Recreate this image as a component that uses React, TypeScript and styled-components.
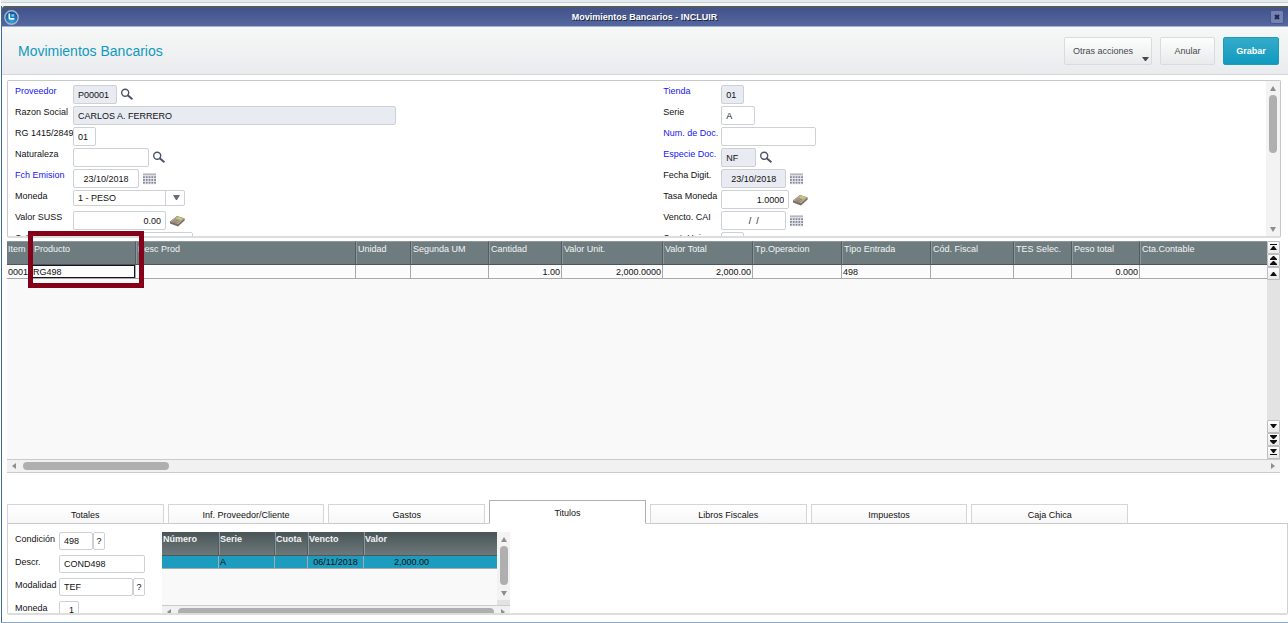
import React from "react";
import styled, { createGlobalStyle, css } from "styled-components";

const GlobalStyle = createGlobalStyle`
  * { box-sizing: border-box; }
  body { margin: 0; background: #fff; }
  body, input, select, button, table {
    font-family: "Liberation Sans", Arial, sans-serif;
    font-size: 9px;
    line-height: 12px;
    color: #111;
  }
`;

/* ---------- window frame ---------- */

const Page = styled.div`
  padding-left: 1px;
`;

const BackStrip = styled.div`
  height: 6px;
  background: #f4f6f7;
  border-top: 2px solid #e3eaee;
  box-shadow: inset 0 1px 0 #c3d0d6;
`;

const Window = styled.main`
  border-left: 1px solid #3f6ba3;
  border-bottom: 1px solid #8fa9c6;
`;

const TitleBar = styled.header`
  display: flex;
  align-items: center;
  justify-content: space-between;
  height: 21px;
  padding: 0 4px 0 2px;
  border-top: 2px solid #565a5c;
  border-bottom: 1px solid #a3b2cf;
  border-radius: 3px 0 0 0;
  background: linear-gradient(#42528a, #5567a0);
  color: #fff;
  font-weight: bold;
`;

const TitleText = styled.span`
  text-shadow: 1px 1px 0 #1c2342;
`;

const CloseButton = styled.button`
  display: flex;
  align-items: center;
  justify-content: center;
  width: 14px;
  height: 14px;
  padding: 0;
  border: 1px solid #46548a;
  border-radius: 2px;
  background: #7582b4;
`;

const Toolbar = styled.div`
  display: flex;
  align-items: center;
  justify-content: space-between;
  height: 48px;
  padding: 0 9px 0 16px;
  background: linear-gradient(#f6f8f7, #eaebee);
  border-bottom: 1px solid #d5d8da;
`;

const Heading = styled.h1`
  margin: 0;
  font-size: 14px;
  line-height: 16px;
  font-weight: normal;
  color: #1199c0;
`;

const Actions = styled.div`
  display: flex;
  gap: 8px;
`;

const ActionButton = styled.button<{ $width: number; $primary?: boolean }>`
  display: flex;
  align-items: center;
  justify-content: center;
  position: relative;
  width: ${(p) => p.$width}px;
  height: 28px;
  padding: 0;
  border: 1px solid #d9dbdd;
  border-radius: 2px;
  background: linear-gradient(#fdfdfd, #e9eaeb);
  color: #45484d;
  ${(p) =>
    p.$primary &&
    css`
      border-color: #1b9cbd;
      background: linear-gradient(#35abca, #109ac0);
      color: #fff;
      font-weight: bold;
    `}
`;

const MenuButton = styled(ActionButton)`
  justify-content: flex-start;
  padding-left: 8px;
`;

const Caret = styled.svg`
  position: absolute;
  right: 2px;
  bottom: 3px;
`;

/* ---------- shared form pieces ---------- */

const Field = styled.div<{ $labelWidth: number; $height: number }>`
  display: grid;
  grid-template-columns: ${(p) => p.$labelWidth}px 1fr;
  height: ${(p) => p.$height}px;
`;

const Label = styled.label<{ $required?: boolean }>`
  white-space: nowrap;
  color: ${(p) => (p.$required ? "#1616f0" : "#111")};
`;

const Controls = styled.div<{ $gap?: number }>`
  display: flex;
  align-items: flex-start;
  gap: ${(p) => p.$gap ?? 4}px;
`;

const TextBox = styled.input<{ $width: number; $small?: boolean; $align?: string }>`
  width: ${(p) => p.$width}px;
  height: ${(p) => (p.$small ? 18 : 19)}px;
  padding: 0 4px;
  border: 1px solid #cdd0d4;
  border-radius: 2px;
  background: #fff;
  text-align: ${(p) => p.$align ?? "left"};
  outline: none;
  &:read-only {
    background: #e8ebf2;
  }
`;

const SelectFrame = styled.div`
  display: grid;
  grid-template-columns: 1fr 18px;
  align-items: center;
  width: 112px;
  height: 16px;
  border: 1px solid #cdd0d4;
  border-radius: 2px;
`;

const Select = styled.select`
  appearance: none;
  height: 14px;
  padding: 0 4px;
  border: 0;
  border-right: 1px solid #cdd0d4;
  background: transparent;
  outline: none;
`;

const IconSlot = styled.button`
  display: flex;
  height: 19px;
  align-items: center;
  padding: 0;
  border: 0;
  background: none;
`;

const HelpButton = styled.button`
  width: 12px;
  height: 18px;
  padding: 0;
  border: 1px solid #cdd0d4;
  border-radius: 2px;
  background: #fff;
`;

/* ---------- supplier form ---------- */

const Content = styled.div`
  padding: 5px 0 7px 5px;
`;

const FormPanel = styled.section`
  display: grid;
  grid-template-columns: 1fr 14px;
  grid-template-rows: minmax(0, 1fr);
  height: 158px;
  margin-right: 7px;
  border: 1px solid #c6c8ca;
  border-bottom: 2px solid #dcdddf;
  border-radius: 2px;
  overflow: hidden;
`;

const FormColumns = styled.div`
  display: grid;
  grid-template-columns: 57fr 53fr;
  align-content: start;
  padding: 4px 0 0 7px;
`;

const ScrollTrack = styled.div`
  display: flex;
  flex-direction: column;
  align-items: center;
  padding: 4px 0;
  background: #f3f3f3;
`;

const VThumb = styled.div<{ $size: number }>`
  width: 8px;
  height: ${(p) => p.$size}px;
  margin: 4px 0 auto;
  border-radius: 4px;
  background: #afafaf;
`;

/* ---------- item grid ---------- */

const Grid = styled.section`
  position: relative;
  display: grid;
  grid-template-columns: 1fr 13px;
  grid-template-rows: 218px 14px;
  margin: 3px 8px 0 0;
`;

const GridBody = styled.div`
  overflow: hidden;
  background: #f9f9f9;
`;

const ItemTable = styled.table`
  width: 100%;
  table-layout: fixed;
  border-collapse: separate;
  border-spacing: 0;
  white-space: nowrap;
  th {
    height: 24px;
    padding: 1px 0 0 2px;
    border-right: 1px solid #535d5f;
    border-top: 1px solid #8d9799;
    border-bottom: 1px solid #4d5658;
    box-shadow: inset 1px 0 0 #8d9799;
    background: #6e7c80;
    color: #f2f4f4;
    font-weight: normal;
    text-align: left;
    vertical-align: top;
  }
  td {
    height: 14px;
    padding: 0 1px;
    border-right: 1px solid #a9a9a9;
    border-bottom: 1px solid #a9a9a9;
    background: #fcfcfc;
  }
  th:first-child { padding-left: 1px; box-shadow: none; }
  th:last-child, td:last-child { border-right: 0; }
`;

const Cell = styled.td<{ $right?: boolean; $current?: boolean }>`
  text-align: ${(p) => (p.$right ? "right" : "left")};
  ${(p) => p.$current && "box-shadow: inset 0 0 0 1px #15151f;"}
`;

const GridNav = styled.div`
  display: flex;
  flex-direction: column;
  background: #e3e3e3;
`;

const NavButton = styled.button<{ $pushed?: boolean }>`
  display: flex;
  align-items: center;
  justify-content: center;
  width: 13px;
  height: 13px;
  margin-top: ${(p) => (p.$pushed ? "auto" : "0")};
  padding: 0;
  border: 1px solid #bdbdbd;
  border-radius: 1px;
  background: linear-gradient(#fff, #e9e9e9);
`;

const HScroll = styled.div`
  grid-column: 1 / -1;
  display: flex;
  align-items: center;
  gap: 6px;
  height: 14px;
  padding: 0 4px;
  border-top: 1px solid #cbcbcb;
  border-bottom: 1px solid #cbcbcb;
  background: #f1f1f1;
`;

const HThumb = styled.div<{ $size: number }>`
  width: ${(p) => p.$size}px;
  height: 8px;
  margin-right: auto;
  border-radius: 4px;
  background: #afafaf;
`;

const Marker = styled.div`
  position: absolute;
  top: -10px;
  left: 21px;
  width: 116px;
  height: 57px;
  border: 5px solid #850019;
  pointer-events: none;
`;

/* ---------- tabs ---------- */

const TabBar = styled.div`
  display: flex;
  align-items: flex-end;
  gap: 4px;
  height: 24px;
  margin-top: 27px;
  padding-right: 160px;
  box-shadow: inset 0 -1px 0 #c9cbcd;
`;

const Tab = styled.button<{ $active?: boolean }>`
  flex: 1 1 0;
  height: ${(p) => (p.$active ? 24 : 20)}px;
  padding: 2px 0 0;
  border: 1px solid ${(p) => (p.$active ? "#aeb0b2" : "#d3d5d7")};
  border-bottom-color: ${(p) => (p.$active ? "#fff" : "#c9cbcd")};
  background: ${(p) => (p.$active ? "#fff" : "linear-gradient(#fff, #f7f7f7)")};
`;

const TabPanel = styled.section`
  display: flex;
  align-items: flex-start;
  gap: 18px;
  height: 91px;
  padding: 8px 0 0 7px;
  border: 1px solid #cfd1d3;
  border-top: 0;
  border-bottom: 2px solid #dcdddf;
  border-radius: 0 0 2px 2px;
  overflow: hidden;
`;

const TermFields = styled.div`
  width: 129px;
  ${Label} {
    padding-top: 1px;
  }
`;

const TitleGrid = styled.div`
  display: grid;
  grid-template-columns: 335px 13px;
  grid-template-rows: 73px 14px;
`;

const TitleTable = styled(ItemTable)`
  th {
    padding: 1px 0 0 1px;
    border-top: 0;
    background: linear-gradient(#4a5557, #6c787b);
    font-weight: bold;
  }
  td {
    height: 13px;
    background: #1c9cbe;
  }
`;

const CenterCell = styled.td`
  text-align: center;
`;

const AmountCell = styled.td`
  && { padding-left: 30px; }
`;

const TitleScroll = styled.div`
  display: flex;
  flex-direction: column;
  background: #e3e3e3;
  ${ScrollTrack} {
    height: 68px;
  }
`;

/* ---------- drawings ---------- */

type Dir = "up" | "down" | "left" | "right";
const arrowPoints: Record<Dir, string> = {
  up: "0,6 3,1 6,6",
  down: "0,1 3,6 6,1",
  left: "5,0 1,3 5,6",
  right: "1,0 5,3 1,6",
};

const Arrow = ({ dir }: { dir: Dir }) => (
  <svg width="6" height="6" viewBox="0 0 6 6" aria-hidden="true">
    <polygon points={arrowPoints[dir]} fill="#8e8e8e" />
  </svg>
);

const navShapes: Record<string, React.ReactNode> = {
  first: <path d="M1 1h7v1H1zM4 3h1l3 4H1z" />,
  pageUp: <path d="M4 0h1l3 3v1H1V3zM4 5h1l3 3v1H1V8z" />,
  up: <path d="M4 3h1l3 4H1z" />,
  down: <path d="M1 2h7L5 6H4z" />,
  pageDown: <path d="M1 0h7v1L5 4H4L1 1zM1 5h7v1L5 9H4L1 6z" />,
  last: <path d="M1 1h7L5 5H4zM1 6h7v1H1z" />,
};

const Nav = ({ kind, label, pushed }: { kind: string; label: string; pushed?: boolean }) => (
  <NavButton type="button" aria-label={label} $pushed={pushed}>
    <svg width="9" height="9" viewBox="0 0 9 9" fill="#111">{navShapes[kind]}</svg>
  </NavButton>
);

const SearchIcon = () => (
  <svg width="12" height="13" viewBox="0 0 12 13" fill="none" stroke="#4b5568">
    <circle cx="4.2" cy="4.8" r="3.5" strokeWidth="1.4" />
    <path d="M7 7.4l3.800 3.300" strokeWidth="2" strokeLinecap="round" />
  </svg>
);

const CalendarIcon = () => (
  <svg width="13" height="12" viewBox="0 0 14 12">
    <rect width="14" height="12" fill="#eeeff2" />
    <rect width="14" height="2" fill="#b4b7c0" />
    {[3, 6, 9].map((y) =>
      [0, 3, 6, 9, 12].map((x) => (
        <rect key={`${x}-${y}`} x={x} y={y} width="2" height="2" fill="#858a9a" />
      )),
    )}
  </svg>
);

const CalculatorIcon = () => (
  <svg width="15" height="12" viewBox="0 0 15 12">
    <path d="M0 6.5L7 1l7.6 2.500v2L8 11.5 0 8.5z" fill="#7c6a5c" />
    <path d="M0 6.5L7 1l7.6 2.5L8 9.5z" fill="#b3a798" />
    <path d="M6 3.2L8 1.8l4.6 1.5-1.9 1.7z" fill="#b9d468" />
    <path d="M3 5.6l5 2M4.6 4.5l5 1.8M2 6.6l5 1.9" stroke="#8b7a6c" strokeWidth=".8" />
  </svg>
);

const AppLogo = () => (
  <svg width="15" height="15" viewBox="0 0 15 15" aria-hidden="true">
    <defs>
      <radialGradient id="orb" cx=".5" cy=".8" r=".8">
        <stop offset="0" stopColor="#2fa6e0" />
        <stop offset="1" stopColor="#0a4a8c" />
      </radialGradient>
    </defs>
    <circle cx="7.5" cy="7.5" r="6.7" fill="url(#orb)" stroke="#a9b6c6" strokeWidth="1.4" />
    <path d="M4.500 3.500h1.600v4.500h4.200v1.700H6.200c-1.200 0-1.700-.6-1.700-1.700z" fill="#e8f5fc" />
    <path d="M7.400 4.200h2.800v2.400H7.400z" fill="#7fc4e8" />
  </svg>
);

/* ---------- data ---------- */

type FieldSpec = {
  id: string;
  label: string;
  width: number;
  value?: string;
  required?: boolean;
  locked?: boolean;
  align?: string;
  icon?: "search" | "calendar" | "calc";
  select?: boolean;
};

const leftFields: FieldSpec[] = [
  { id: "proveedor", label: "Proveedor", width: 44, value: "P00001", required: true, locked: true, icon: "search" },
  { id: "razon", label: "Razon Social", width: 323, value: "CARLOS A. FERRERO", locked: true },
  { id: "rg", label: "RG 1415/2849", width: 23, value: "01" },
  { id: "naturaleza", label: "Naturaleza", width: 76, icon: "search" },
  { id: "emision", label: "Fch Emision", width: 66, value: "23/10/2018", required: true, align: "center", icon: "calendar" },
  { id: "moneda", label: "Moneda", width: 112, value: "1 - PESO", select: true },
  { id: "suss", label: "Valor SUSS", width: 93, value: "0.00", align: "right", icon: "calc" },
  { id: "cai", label: "C.A.I.", width: 120 },
];

const rightFields: FieldSpec[] = [
  { id: "tienda", label: "Tienda", width: 23, value: "01", required: true, locked: true },
  { id: "serie", label: "Serie", width: 34, value: "A" },
  { id: "numdoc", label: "Num. de Doc.", width: 95, required: true },
  { id: "especie", label: "Especie Doc.", width: 35, value: "NF", required: true, locked: true, icon: "search" },
  { id: "digit", label: "Fecha Digit.", width: 65, value: "23/10/2018", locked: true, align: "center", icon: "calendar" },
  { id: "tasa", label: "Tasa Moneda", width: 68, value: "1.0000", align: "right", icon: "calc" },
  { id: "vencai", label: "Vencto. CAI", width: 65, value: "/  /", align: "center", icon: "calendar" },
  { id: "cont", label: "Cont. Unic.", width: 23 },
];

const icons = { search: <SearchIcon />, calendar: <CalendarIcon />, calc: <CalculatorIcon /> };

const itemColumns = [
  { title: "Item", width: 25, value: "0001" },
  { title: "Producto", width: 104, value: "RG498", current: true },
  { title: "Desc Prod", width: 220, value: "" },
  { title: "Unidad", width: 55, value: "" },
  { title: "Segunda UM", width: 78, value: "" },
  { title: "Cantidad", width: 73, value: "1.00", right: true },
  { title: "Valor Unit.", width: 101, value: "2,000.0000", right: true },
  { title: "Valor Total", width: 90, value: "2,000.00", right: true },
  { title: "Tp.Operacion", width: 89, value: "" },
  { title: "Tipo Entrada", width: 89, value: "498" },
  { title: "Cód. Fiscal", width: 83, value: "" },
  { title: "TES Selec.", width: 58, value: "" },
  { title: "Peso total", width: 68, value: "0.000", right: true },
  { title: "Cta.Contable", width: undefined, value: "" },
];

const tabs = ["Totales", "Inf. Proveedor/Cliente", "Gastos", "Titulos", "Libros Fiscales", "Impuestos", "Caja Chica"];

const terms = [
  { id: "condicion", label: "Condición", value: "498", width: 34, help: true },
  { id: "descr", label: "Descr.", value: "COND498", width: 86 },
  { id: "modalidad", label: "Modalidad", value: "TEF", width: 74, help: true },
  { id: "tmoneda", label: "Moneda", value: "1", width: 20, align: "right" },
];

const FieldColumn = ({ fields }: { fields: FieldSpec[] }) => (
  <div>
    {fields.map((f) => (
      <Field key={f.id} $labelWidth={58} $height={21}>
        <Label htmlFor={f.id} $required={f.required}>{f.label}</Label>
        <Controls>
          {f.select ? (
            <SelectFrame>
              <Select id={f.id} defaultValue={f.value}>
                <option>{f.value}</option>
              </Select>
              <svg width="18" height="6" viewBox="0 0 18 6" aria-hidden="true">
                <polygon points="7,0 14,0 11,5 10,5" fill="#666c75" />
              </svg>
            </SelectFrame>
          ) : (
            <TextBox id={f.id} $width={f.width} $align={f.align} readOnly={f.locked} defaultValue={f.value} />
          )}
          {f.icon && <IconSlot type="button" aria-label={`Abrir ${f.label}`}>{icons[f.icon]}</IconSlot>}
        </Controls>
      </Field>
    ))}
  </div>
);

export default function App() {
  return (
    <Page>
      <GlobalStyle />
      <BackStrip />
      <Window>
        <TitleBar>
          <AppLogo />
          <TitleText>Movimientos Bancarios - INCLUIR</TitleText>
          <CloseButton type="button" aria-label="Cerrar">
            <svg width="6" height="6" viewBox="0 0 6 6" stroke="#1f2748" strokeWidth="2">
              <path d="M1 1l4 4M5 1L1 5" />
            </svg>
          </CloseButton>
        </TitleBar>
        <Toolbar>
          <Heading>Movimientos Bancarios</Heading>
          <Actions>
            <MenuButton type="button" $width={88}>
              Otras acciones
              <Caret width="7" height="4" viewBox="0 0 7 4"><polygon points="0,0 7,0 4,4 3,4" fill="#444a55" /></Caret>
            </MenuButton>
            <ActionButton type="button" $width={55}>Anular</ActionButton>
            <ActionButton type="button" $width={56} $primary>Grabar</ActionButton>
          </Actions>
        </Toolbar>
        <Content>
          <FormPanel>
            <FormColumns>
              <FieldColumn fields={leftFields} />
              <FieldColumn fields={rightFields} />
            </FormColumns>
            <ScrollTrack>
              <Arrow dir="up" />
              <VThumb $size={58} />
              <Arrow dir="down" />
            </ScrollTrack>
          </FormPanel>

          <Grid>
            <GridBody>
              <ItemTable>
                <colgroup>
                  {itemColumns.map((c) => <col key={c.title} width={c.width} />)}
                </colgroup>
                <thead>
                  <tr>{itemColumns.map((c) => <th key={c.title}>{c.title}</th>)}</tr>
                </thead>
                <tbody>
                  <tr>
                    {itemColumns.map((c) => (
                      <Cell key={c.title} $right={c.right} $current={c.current}>{c.value}</Cell>
                    ))}
                  </tr>
                </tbody>
              </ItemTable>
            </GridBody>
            <GridNav>
              <Nav kind="first" label="Primero" />
              <Nav kind="pageUp" label="Página anterior" />
              <Nav kind="up" label="Anterior" />
              <Nav kind="down" label="Siguiente" pushed />
              <Nav kind="pageDown" label="Página siguiente" />
              <Nav kind="last" label="Último" />
            </GridNav>
            <HScroll>
              <Arrow dir="left" />
              <HThumb $size={146} />
              <Arrow dir="right" />
            </HScroll>
            <Marker />
          </Grid>

          <TabBar role="tablist">
            {tabs.map((t) => (
              <Tab key={t} type="button" role="tab" aria-selected={t === "Titulos"} $active={t === "Titulos"}>{t}</Tab>
            ))}
          </TabBar>
          <TabPanel>
            <TermFields>
              {terms.map((f) => (
                <Field key={f.id} $labelWidth={44} $height={23}>
                  <Label htmlFor={f.id}>{f.label}</Label>
                  <Controls $gap={0}>
                    <TextBox id={f.id} $small $width={f.width} $align={f.align} defaultValue={f.value} />
                    {f.help && <HelpButton type="button">?</HelpButton>}
                  </Controls>
                </Field>
              ))}
            </TermFields>
            <TitleGrid>
              <GridBody>
                <TitleTable>
                  <colgroup>
                    <col width="57" /><col width="56" /><col width="33" /><col width="56" /><col />
                  </colgroup>
                  <thead>
                    <tr><th>Número</th><th>Serie</th><th>Cuota</th><th>Vencto</th><th>Valor</th></tr>
                  </thead>
                  <tbody>
                    <tr><td /><td>A</td><td /><CenterCell>06/11/2018</CenterCell><AmountCell>2,000.00</AmountCell></tr>
                  </tbody>
                </TitleTable>
              </GridBody>
              <TitleScroll>
                <ScrollTrack>
                  <Arrow dir="up" />
                  <VThumb $size={39} />
                  <Arrow dir="down" />
                </ScrollTrack>
              </TitleScroll>
              <HScroll>
                <Arrow dir="left" />
                <HThumb $size={317} />
                <Arrow dir="right" />
              </HScroll>
            </TitleGrid>
          </TabPanel>
        </Content>
      </Window>
    </Page>
  );
}
